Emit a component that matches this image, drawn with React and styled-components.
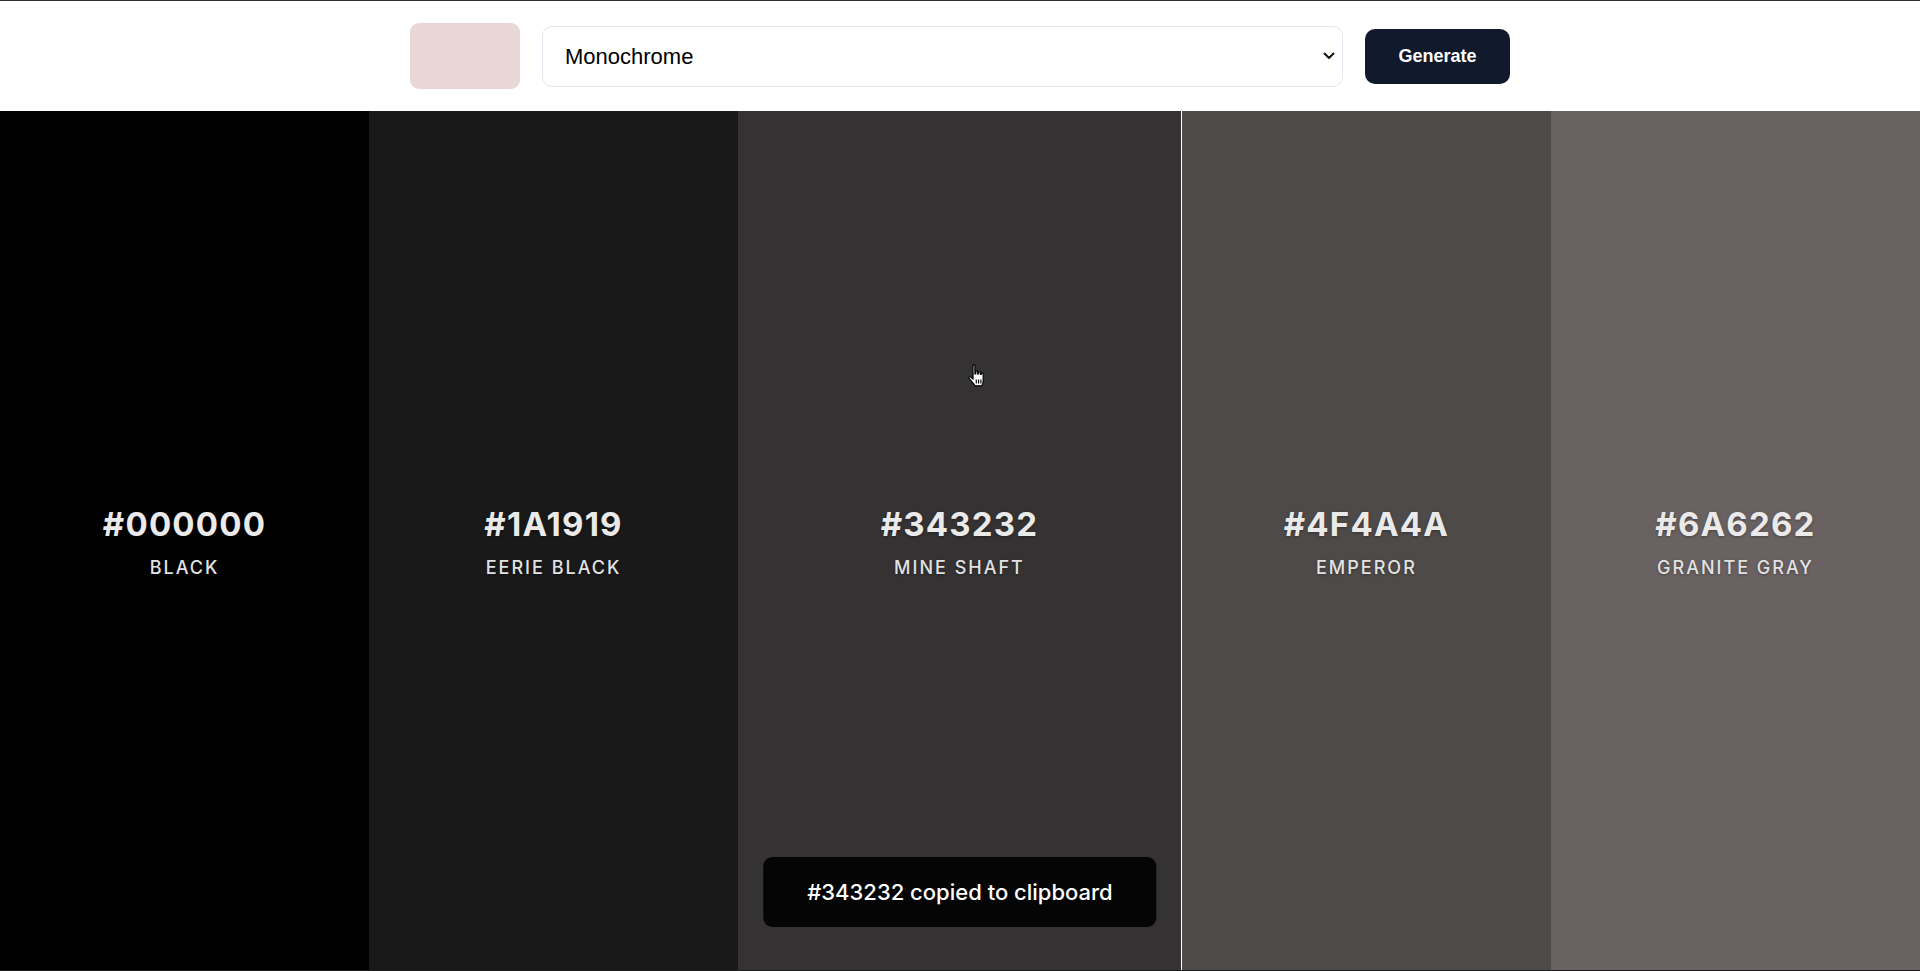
import React, { useState } from "react";
import styled, { createGlobalStyle } from "styled-components";

const GlobalStyle = createGlobalStyle`
  html, body {
    margin: 0;
    padding: 0;
    height: 100%;
  }
  body {
    font-family: "Inter", "Liberation Sans", sans-serif;
    background: #ffffff;
    overflow: hidden;
  }
  * {
    box-sizing: border-box;
  }
`;

const colors = [
  { hex: "#000000", name: "Black" },
  { hex: "#1A1919", name: "Eerie Black" },
  { hex: "#343232", name: "Mine Shaft" },
  { hex: "#4F4A4A", name: "Emperor" },
  { hex: "#6A6262", name: "Granite Gray" },
];

export default function App() {
  const [mode, setMode] = useState("monochrome");
  const active = 2;

  return (
    <>
      <GlobalStyle />
      <Page>
        <Header>
          <Controls>
            <Swatch $color="#e9d6d7" />
            <SelectWrap>
              <Select value={mode} onChange={(e) => setMode(e.target.value)}>
                <option value="monochrome">Monochrome</option>
                <option value="analogic">Analogic</option>
                <option value="complement">Complement</option>
                <option value="triad">Triad</option>
              </Select>
              <Chevron viewBox="0 0 12 8" width="12" height="8">
                <path
                  d="M1.5 1.5 L6 6 L10.5 1.5"
                  fill="none"
                  stroke="#111"
                  strokeWidth="2"
                  strokeLinecap="round"
                  strokeLinejoin="round"
                />
              </Chevron>
            </SelectWrap>
            <GenerateButton>Generate</GenerateButton>
          </Controls>
        </Header>

        <Palette>
          {colors.map((c, i) => (
            <Column key={c.hex} $color={c.hex} $active={i === active}>
              <Hex>{c.hex}</Hex>
              <Name>{c.name}</Name>
            </Column>
          ))}
          <Toast>#343232 copied to clipboard</Toast>
          <Cursor viewBox="0 0 16 20" width="19" height="23">
            <path
              d="M5 1.2 C5 0.3 6.6 0.3 6.6 1.2 L6.6 8.6 L7.4 8.6 L7.4 6.6 C7.4 5.8 9 5.8 9 6.6 L9 8.6 L9.8 8.6 L9.8 7.4 C9.8 6.6 11.4 6.6 11.4 7.4 L11.4 9 L12.2 9 L12.2 8.4 C12.2 7.6 13.8 7.6 13.8 8.4 L13.8 14.6 C13.8 16.6 13 18.4 12.2 19 L6.8 19 C5.8 17.6 3.8 15.2 1.6 12.6 C0.9 11.6 2 10.7 2.9 11.3 L5 13.2 Z"
              fill="#fff"
              stroke="#000"
              strokeWidth="1"
              strokeLinejoin="round"
            />
            <path d="M7.8 13.4 L7.8 17 M9.8 13.4 L9.8 17 M11.8 13.4 L11.8 17" stroke="#000" strokeWidth="1" />
          </Cursor>
        </Palette>
      </Page>
    </>
  );
}

const Page = styled.div`
  height: 100vh;
  display: flex;
  flex-direction: column;
  border-top: 1px solid #2e2e2e;
  border-bottom: 1px solid #1c1c1c;
`;

const Header = styled.header`
  height: 110px;
  flex-shrink: 0;
  display: flex;
  align-items: center;
  justify-content: center;
  background: #ffffff;
`;

const Controls = styled.div`
  width: 1100px;
  display: flex;
  align-items: center;
  gap: 22px;
`;

const Swatch = styled.div`
  width: 110px;
  height: 66px;
  border-radius: 9px;
  background: ${(p) => p.$color};
  flex-shrink: 0;
`;

const SelectWrap = styled.div`
  position: relative;
  flex: 1;
  height: 61px;
`;

const Select = styled.select`
  appearance: none;
  width: 100%;
  height: 100%;
  padding: 0 40px 0 22px;
  border: 1px solid #e2e8f0;
  border-radius: 10px;
  background: #ffffff;
  color: #000;
  font-family: "Liberation Sans", Arial, sans-serif;
  font-size: 22px;
  outline: none;
`;

const Chevron = styled.svg`
  position: absolute;
  right: 8px;
  top: 50%;
  transform: translateY(-50%);
  pointer-events: none;
`;

const GenerateButton = styled.button`
  width: 145px;
  height: 55px;
  flex-shrink: 0;
  border: none;
  border-radius: 10px;
  background: #111a2c;
  color: #ffffff;
  font-family: "Liberation Sans", Arial, sans-serif;
  font-weight: 700;
  font-size: 18px;
  cursor: pointer;
`;

const Palette = styled.main`
  position: relative;
  flex: 1;
  display: flex;
`;

const Column = styled.section`
  flex: ${(p) => (p.$active ? 1.2 : 1)} 1 0;
  background: ${(p) => p.$color};
  display: flex;
  flex-direction: column;
  align-items: center;
  justify-content: center;
  color: #eaeaea;
  border-right: ${(p) => (p.$active ? "1px solid #ffffff" : "none")};
  cursor: pointer;
`;

const Hex = styled.div`
  font-family: "Inter", sans-serif;
  font-size: 33px;
  font-weight: 700;
  letter-spacing: 1.2px;
  text-shadow: 0 1px 3px rgba(0, 0, 0, 0.35);
`;

const Name = styled.div`
  margin-top: 13px;
  font-family: "Inter", sans-serif;
  font-size: 18px;
  font-weight: 500;
  letter-spacing: 2px;
  text-transform: uppercase;
  color: #e2e2e2;
  text-shadow: 0 1px 3px rgba(0, 0, 0, 0.35);
`;

const Toast = styled.div`
  position: absolute;
  left: 50%;
  bottom: 43px;
  transform: translateX(-50%);
  height: 70px;
  padding: 0 44px;
  display: flex;
  align-items: center;
  background: #050505;
  border-radius: 9px;
  color: #ffffff;
  font-family: "Inter", sans-serif;
  font-size: 22px;
  font-weight: 500;
  white-space: nowrap;
`;

const Cursor = styled.svg`
  position: absolute;
  left: 967px;
  top: 253px;
  pointer-events: none;
`;
